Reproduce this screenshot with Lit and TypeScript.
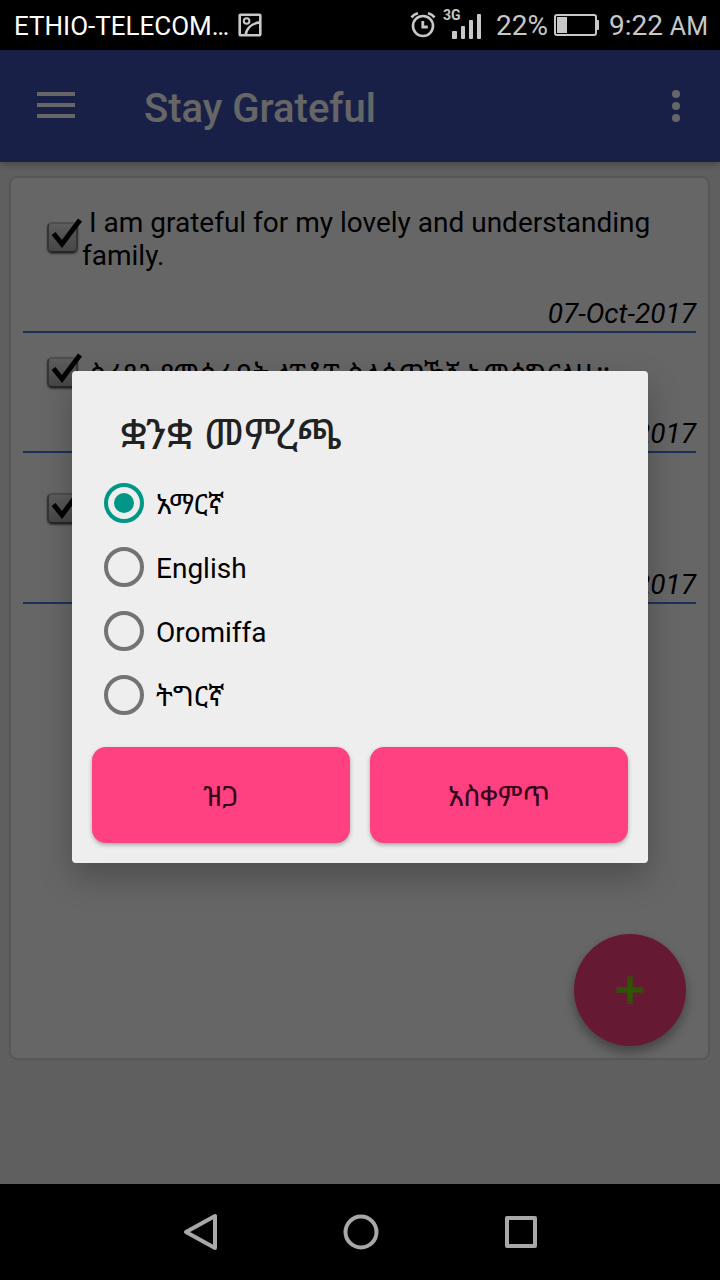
import { LitElement, html, css } from "lit";
import { customElement, property, state } from "lit/decorators.js";

interface Note {
  text: string;
  date: string;
}

const NOTES: Note[] = [
  { text: "I am grateful for my lovely and understanding family.", date: "07-Oct-2017" },
  { text: "ስራዬን የመሰራበት ላፕቶፕ ስለሰጠኸኝ አመሰግናለሁ።", date: "07-Oct-2017" },
  { text: "\n\u00a0", date: "07-Oct-2017" },
];

const LANGUAGES = [
  { id: "am", label: "አማርኛ" },
  { id: "en", label: "English" },
  { id: "om", label: "Oromiffa" },
  { id: "ti", label: "ትግርኛ" },
];

@customElement("status-bar")
export class StatusBar extends LitElement {
  static styles = css`
    :host {
      display: flex;
      align-items: center;
      justify-content: space-between;
      box-sizing: border-box;
      height: 50px;
      padding: 2px 12px 0 14px;
      background: #000;
      color: #c8c8c8;
      font-size: 28px;
      line-height: 32px;
      white-space: nowrap;
    }
    .side {
      display: flex;
      align-items: center;
    }
    .carrier {
      color: #fff;
      font-size: 26px;
      margin-right: 9px;
    }
    .photo {
      margin-bottom: 2px;
    }
    .signal {
      margin: 0 14px 0 6px;
    }
    .status {
      margin-bottom: 4px;
    }
    .battery {
      margin: 0 10px 2px 6px;
    }
    .am {
      font-size: 25px;
    }
    svg {
      display: block;
    }
    .net {
      font: 700 14px Roboto, sans-serif;
    }
  `;

  render() {
    return html`
      <div class="side">
        <span class="carrier">ETHIO-TELECOM…</span>
        <svg class="photo" width="24" height="24" viewBox="0 0 24 24" fill="none" stroke="#c8c8c8" stroke-width="2.6">
          <rect x="1.7" y="1.7" width="20.6" height="20.6" rx="0.8" />
          <circle cx="8.600" cy="8" r="2.8" stroke-width="2" />
          <path d="M7.600 22c.8-6.600 6-11.600 14.400-12.600" />
        </svg>
      </div>
      <div class="side">
        <svg class="status" width="26" height="28" viewBox="0 0 26 28" fill="none" stroke="#c8c8c8">
          <circle cx="13" cy="16" r="10" stroke-width="2.600" />
          <path d="M12.800 11v6h5" stroke-width="2.800" />
          <path d="M1.500 7.500Q4 4 8 3.200M24.500 7.500Q22 4 18 3.200" stroke-width="2.600" />
        </svg>
        <svg class="signal status" width="40" height="34" viewBox="0 0 40 34" fill="#c8c8c8">
          <text class="net" x="1" y="13">3G</text>
          <rect x="10" y="24" width="5" height="8" rx="1" />
          <rect x="19" y="19" width="4" height="13" rx="1" />
          <rect x="27" y="13" width="4" height="19" rx="1" />
          <rect x="35" y="7" width="4" height="25" rx="1" />
        </svg>
        <span>22%</span>
        <svg class="battery" width="45" height="22" viewBox="0 0 45 22">
          <rect x="1" y="1" width="41" height="20" rx="2" fill="none" stroke="#c8c8c8" stroke-width="2" />
          <rect x="3" y="3" width="10" height="16" fill="#c8c8c8" />
          <path d="M42 6h2q1 0 1 1v8q0 1-1 1h-2z" fill="#c8c8c8" />
        </svg>
        <span>9:22 <span class="am">AM</span></span>
      </div>
    `;
  }
}

@customElement("note-row")
export class NoteRow extends LitElement {
  @property({ attribute: false }) note!: Note;
  @property({ type: Number }) index = 0;

  static styles = css`
    :host {
      display: flex;
      flex-direction: column;
      padding-top: 24px;
      border-bottom: 2px solid #4a78e0;
      line-height: 33px;
      font-size: 28px;
      color: #000;
    }
    .entry {
      display: flex;
      align-items: center;
      padding: 0 24px 25px;
    }
    .tick {
      display: grid;
      flex: none;
      width: 35px;
      margin-bottom: 4px;
    }
    .tick > * {
      grid-area: 1 / 1;
    }
    input {
      appearance: none;
      box-sizing: border-box;
      width: 31px;
      height: 31px;
      margin: 0;
      border: 2px solid #858585;
      border-top-color: #c4c4c4;
      border-bottom-color: #606060;
      border-radius: 5px;
      background: linear-gradient(#e8e8e8, #b0b0b0);
      box-shadow: 0 1px 2px rgba(0, 0, 0, 0.5);
    }
    svg {
      display: block;
      overflow: visible;
      pointer-events: none;
    }
    label {
      flex: 1;
      white-space: pre-line;
    }
    time {
      align-self: flex-end;
      font-style: italic;
      padding-bottom: 1px;
    }
  `;

  render() {
    const id = `note-${this.index}`;
    return html`
      <div class="entry">
        <div class="tick">
          <input type="checkbox" id=${id} checked />
          <svg width="35" height="31" viewBox="0 0 35 31">
            <path d="M6.500 11.500l8.500 10.500L33-2" fill="none" stroke="#000" stroke-width="5" />
          </svg>
        </div>
        <label for=${id}>&nbsp;${this.note.text}</label>
      </div>
      <time>${this.note.date}</time>
    `;
  }
}

@customElement("language-dialog")
export class LanguageDialog extends LitElement {
  @state() private selected = "am";

  static styles = css`
    :host {
      display: block;
      width: 80%;
      box-sizing: border-box;
      padding: 0 20px 20px;
      border-radius: 4px;
      background: #eee;
      box-shadow: 0 14px 32px rgba(0, 0, 0, 0.25);
      color: #000;
    }
    h2 {
      margin: 0;
      padding: 40px 28px 12px;
      font-size: 42px;
      line-height: 48px;
      font-weight: 400;
      color: #212121;
    }
    fieldset {
      margin: 0 0 20px;
      padding: 0 12px;
      border: 0;
    }
    .option {
      display: flex;
      align-items: center;
      gap: 12px;
      height: 64px;
      font-size: 28px;
      line-height: 32px;
    }
    .option span {
      padding-top: 4px;
    }
    input {
      appearance: none;
      display: grid;
      place-items: center;
      box-sizing: border-box;
      width: 40px;
      height: 40px;
      margin: 0;
      border: 4px solid #737373;
      border-radius: 50%;
    }
    input:checked {
      border-color: #009688;
    }
    input:checked::before {
      content: "";
      width: 20px;
      height: 20px;
      border-radius: 50%;
      background: #009688;
    }
    .actions {
      display: grid;
      grid-template-columns: 1fr 1fr;
      gap: 20px;
    }
    button {
      height: 96px;
      padding: 0;
      border: 0;
      border-radius: 14px;
      background: #ff4081;
      box-shadow: 0 2px 4px rgba(0, 0, 0, 0.3);
      font: inherit;
      font-size: 28px;
      color: #33041a;
    }
  `;

  render() {
    return html`
      <h2 id="title">ቋንቋ መምረጫ</h2>
      <fieldset aria-labelledby="title">
        ${LANGUAGES.map(
          (l) => html`
            <label class="option">
              <input
                type="radio"
                name="language"
                value=${l.id}
                .checked=${this.selected === l.id}
                @change=${() => (this.selected = l.id)}
              />
              <span>${l.label}</span>
            </label>
          `
        )}
      </fieldset>
      <div class="actions">
        <button type="button">ዝጋ</button>
        <button type="button">አስቀምጥ</button>
      </div>
    `;
  }
}

@customElement("app-root")
export class AppRoot extends LitElement {
  static styles = css`
    :host {
      display: flex;
      flex-direction: column;
      min-height: 100vh;
      font-family: Roboto, "Noto Sans Ethiopic", "Abyssinica SIL", sans-serif;
    }
    .screen {
      position: relative;
      flex: 1;
      display: flex;
      flex-direction: column;
      background: #eee;
    }
    header {
      display: flex;
      align-items: center;
      height: 112px;
      padding: 0 36px;
      background: #3f51b5;
      box-shadow: 0 2px 8px rgba(0, 0, 0, 0.3);
      color: #fff;
    }
    h1 {
      flex: 1;
      margin: 0;
      padding: 6px 0 0 68px;
      font-size: 40px;
      line-height: 48px;
      font-weight: 500;
    }
    .icon {
      padding: 0;
      border: 0;
      background: none;
      color: inherit;
    }
    svg {
      display: block;
    }
    main {
      flex: 1;
      display: flex;
      flex-direction: column;
      padding: 14px 10px 124px 9px;
    }
    .card {
      position: relative;
      flex: 1;
      box-sizing: border-box;
      padding: 4px 12px;
      border: 2px solid #dadada;
      border-radius: 8px;
      background: #fff;
    }
    .fab {
      position: absolute;
      right: 22px;
      bottom: 12px;
      display: grid;
      place-items: center;
      width: 112px;
      height: 112px;
      padding: 0;
      border: 0;
      border-radius: 50%;
      background: #ff4081;
      box-shadow: 0 6px 12px rgba(0, 0, 0, 0.35);
    }
    .scrim {
      position: absolute;
      inset: 0;
      display: grid;
      place-items: center;
      background: rgba(0, 0, 0, 0.6);
    }
    nav {
      display: flex;
      justify-content: center;
      align-items: center;
      gap: 120px;
      height: 96px;
      background: #000;
      color: #a8a8a8;
    }
  `;

  render() {
    return html`
      <status-bar></status-bar>
      <div class="screen">
        <header>
          <button class="icon" aria-label="Menu">
            <svg width="40" height="30" viewBox="0 0 40 30" fill="currentColor">
              <path d="M1 1h38v4H1zM1 12h38v4H1zM1 23h38v4H1z" />
            </svg>
          </button>
          <h1>Stay Grateful</h1>
          <button class="icon" aria-label="More options">
            <svg width="16" height="32" viewBox="0 0 16 32" fill="currentColor">
              <circle cx="8" cy="4" r="4" />
              <circle cx="8" cy="16" r="4" />
              <circle cx="8" cy="28" r="4" />
            </svg>
          </button>
        </header>
        <main>
          <div class="card">
            ${NOTES.map((n, i) => html`<note-row .note=${n} .index=${i}></note-row>`)}
            <button class="fab" aria-label="Add">
              <svg width="28" height="28" viewBox="0 0 28 28">
                <path d="M11 0h6v11h11v6H17v11h-6V17H0v-6h11z" fill="#a0a030" />
                <path d="M12 3h4v9h9v4h-9v9h-4v-9H3v-4h9z" fill="#70d800" />
              </svg>
            </button>
          </div>
        </main>
        <div class="scrim">
          <language-dialog role="dialog" aria-modal="true"></language-dialog>
        </div>
      </div>
      <nav>
        <button class="icon" aria-label="Back">
          <svg width="40" height="40" viewBox="0 0 40 40" fill="none" stroke="currentColor" stroke-width="4" stroke-linejoin="round">
            <path d="M35 4v32L6 20z" />
          </svg>
        </button>
        <button class="icon" aria-label="Home">
          <svg width="40" height="40" viewBox="0 0 40 40" fill="none" stroke="currentColor" stroke-width="4">
            <circle cx="21" cy="20" r="15.500" />
          </svg>
        </button>
        <button class="icon" aria-label="Recent apps">
          <svg width="40" height="40" viewBox="0 0 40 40" fill="none" stroke="currentColor" stroke-width="4" stroke-linejoin="round">
            <rect x="7" y="6" width="28" height="28" />
          </svg>
        </button>
      </nav>
    `;
  }
}
